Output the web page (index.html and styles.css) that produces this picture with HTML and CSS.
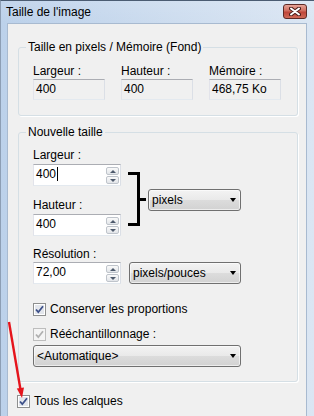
FILE: index.html
```html
<!DOCTYPE html>
<html lang="fr">
<head>
    <meta charset="UTF-8">
    <title>Taille de l'image</title>
    <link rel="stylesheet" href="styles.css">
</head>
<body>
<div class="window">
    <div class="titlebar">
        <span class="title">Taille de l'image</span>
        <span class="close">
            <svg width="12" height="9" viewBox="0 0 12 9">
                <path d="M2 1.5 L10 7.5 M10 1.5 L2 7.5" stroke="#4a1d19" stroke-width="4" stroke-linecap="round"/>
                <path d="M2 1.5 L10 7.5 M10 1.5 L2 7.5" stroke="#fff" stroke-width="2" stroke-linecap="round"/>
            </svg>
        </span>
    </div>
    <div class="client">
        <fieldset class="group group-info">
            <legend>Taille en pixels / Mémoire (Fond)</legend>
            <div class="info-row">
                <div class="info-cell">
                    <div class="label">Largeur :</div>
                    <div class="readonly">400</div>
                </div>
                <div class="info-cell">
                    <div class="label">Hauteur :</div>
                    <div class="readonly">400</div>
                </div>
                <div class="info-cell">
                    <div class="label">Mémoire :</div>
                    <div class="readonly">468,75 Ko</div>
                </div>
            </div>
        </fieldset>

        <fieldset class="group group-size">
            <legend>Nouvelle taille</legend>
            <div class="size-row">
                <div class="size-fields">
                    <div class="field">
                        <div class="label">Largeur :</div>
                        <div class="spin-field">
                            <span class="spin-text">400<span class="caret"></span></span>
                            <span class="spinner"><span class="spin up"></span><span class="spin down"></span></span>
                        </div>
                    </div>
                    <div class="field">
                        <div class="label">Hauteur :</div>
                        <div class="spin-field">
                            <span class="spin-text">400</span>
                            <span class="spinner"><span class="spin up"></span><span class="spin down"></span></span>
                        </div>
                    </div>
                </div>
                <div class="bracket"></div>
                <div class="combo combo-unit">pixels<span class="arrow-down"></span></div>
            </div>

            <div class="label label-res">Résolution :</div>
            <div class="res-row">
                <div class="spin-field">
                    <span class="spin-text">72,00</span>
                    <span class="spinner"><span class="spin up"></span><span class="spin down"></span></span>
                </div>
                <div class="combo combo-res">pixels/pouces<span class="arrow-down"></span></div>
            </div>

            <div class="check check-ratio">
                <svg class="box" width="13" height="13" viewBox="0 0 13 13">
                    <rect x="0.5" y="0.5" width="12" height="12" fill="#fff" stroke="#8e8f8f"/>
                    <rect x="2" y="2" width="9" height="9" fill="#e3e6ec"/>
                    <path d="M3 6.5 L5.3 9.2 L10 3.2" fill="none" stroke="#3d5089" stroke-width="1.8"/>
                </svg>
                <span>Conserver les proportions</span>
            </div>
            <div class="check check-resample disabled">
                <svg class="box" width="13" height="13" viewBox="0 0 13 13">
                    <rect x="0.5" y="0.5" width="12" height="12" fill="#f4f4f4" stroke="#bdbdbd"/>
                    <path d="M3 6.5 L5.3 9.2 L10 3.2" fill="none" stroke="#b0b0b0" stroke-width="1.8"/>
                </svg>
                <span>Rééchantillonnage :</span>
            </div>
            <div class="combo combo-method">&lt;Automatique&gt;<span class="arrow-down"></span></div>
        </fieldset>

        <div class="check check-layers">
            <svg class="box" width="13" height="13" viewBox="0 0 13 13">
                <rect x="0.5" y="0.5" width="12" height="12" fill="#fff" stroke="#8e8f8f"/>
                <rect x="2" y="2" width="9" height="9" fill="#e3e6ec"/>
                <path d="M3 6.5 L5.3 9.2 L10 3.2" fill="none" stroke="#3d5089" stroke-width="1.8"/>
            </svg>
            <span>Tous les calques</span>
        </div>
    </div>

    <!-- annotation -->
    <svg class="annotation" width="314" height="416" viewBox="0 0 314 416">
        <line x1="9" y1="322" x2="20.4" y2="389" stroke="#e5141c" stroke-width="2.4"/>
        <polygon points="22,398 24,387.4 16.8,388.6" fill="#e5141c"/>
    </svg>
</div>
</body>
</html>
```

FILE: styles.css
```css
* {
    box-sizing: border-box;
}
body {
    margin: 0;
    font-family: "Liberation Sans", Arial, sans-serif;
    font-size: 12px;
    line-height: 15px;
    color: #000;
}
.window {
    position: relative;
    width: 314px;
    height: 416px;
    overflow: hidden;
    display: flex;
    flex-direction: column;
    border-top: 1px solid #4b5c72;
    border-left: 1px solid #8d9eb4;
    background: linear-gradient(to right, #bcd1ea, #dbe6f3);
}
.titlebar {
    display: flex;
    align-items: flex-start;
    height: 22px;
    padding: 4px 7px 0 5px;
    background: linear-gradient(rgba(255, 255, 255, 0.1), rgba(255, 255, 255, 0));
}
.close {
    display: flex;
    align-items: center;
    justify-content: center;
    width: 24px;
    height: 15px;
    margin-left: auto;
    margin-top: -1px;
    border: 1px solid #5e2a26;
    border-radius: 3px;
    background: linear-gradient(#e7a497, #d06c5e 45%, #c0463a 55%, #cf6a58);
}
.client {
    flex: 1;
    margin: 0 7px 0 6px;
    padding: 16px 8px 0 10px;
    background: #f0f0f0;
    border: 1px solid #a8bad0;
    border-bottom: none;
}

/* group boxes */
.group {
    margin: 0;
    padding: 8px 14px 15px;
    border: 1px solid #d5dfe5;
    border-radius: 3px;
    box-shadow: 1px 1px 0 #fff;
    min-width: 0;
}
.group legend {
    margin-left: -7px;
    padding: 0 2px;
}
.group-info {
    padding-top: 9px;
}
.group-size {
    margin-top: 9px;
    padding-bottom: 14px;
}
.label {
    line-height: 15px;
}
.info-row {
    display: flex;
    gap: 16px;
}
.info-cell {
    width: 72px;
}
.readonly {
    height: 21px;
    padding-left: 2px;
    line-height: 19px;
    border: 1px solid;
    border-color: #abadb3 #dbdfe6 #e3e9ef #e2e3ea;
}

/* nouvelle taille */
.size-row {
    display: flex;
    align-items: flex-start;
}
.size-fields {
    width: 88px;
}
.field .label {
    margin-bottom: 1px;
}
.field + .field {
    margin-top: 12px;
}
.spin-field {
    display: flex;
    width: 88px;
    height: 22px;
    background: #fff;
    border: 1px solid;
    border-color: #abadb3 #dbdfe6 #e3e9ef #e2e3ea;
}
.spin-text {
    flex: 1;
    padding-left: 2px;
    line-height: 19px;
}
.caret {
    display: inline-block;
    width: 1px;
    height: 14px;
    margin-left: 1px;
    vertical-align: -3px;
    background: #000;
}
.spinner {
    display: flex;
    flex-direction: column;
    gap: 1px;
    padding: 2px 1px 0 0;
}
.spin {
    display: flex;
    align-items: center;
    justify-content: center;
    width: 13px;
    height: 8px;
    border: 1px solid #bfc4cb;
    border-radius: 2px;
    background: linear-gradient(#fafafa, #e2e5e9);
}
.spin::before {
    content: "";
    border-left: 3px solid transparent;
    border-right: 3px solid transparent;
}
.spin.up::before {
    border-bottom: 3px solid #4e5a6c;
}
.spin.down::before {
    border-top: 3px solid #4e5a6c;
}
.bracket {
    position: relative;
    width: 12px;
    height: 54px;
    margin: 24px 0 0 7px;
    border: 3px solid #000;
    border-left: none;
}
.bracket::after {
    content: "";
    position: absolute;
    top: 23px;
    right: -9px;
    width: 6px;
    height: 3px;
    background: #000;
}
.combo {
    display: flex;
    align-items: center;
    height: 22px;
    padding: 0 4px 0 3px;
    border: 1px solid #707070;
    border-radius: 3px;
    background: linear-gradient(#f3f3f3, #e9e9e9 50%, #dcdcdc 51%, #d2d2d2);
    box-shadow: inset 0 0 0 1px rgba(255, 255, 255, 0.6);
}
.arrow-down {
    margin-left: auto;
    border-top: 4px solid #000;
    border-left: 3.5px solid transparent;
    border-right: 3.5px solid transparent;
}
.combo-unit {
    width: 93px;
    margin: 41px 0 0 8px;
}
.label-res {
    margin-top: 11px;
}
.res-row {
    display: flex;
    gap: 8px;
}
.combo-res {
    width: 112px;
}
.combo-method {
    width: 208px;
    margin-top: 3px;
}

/* checkboxes */
.check {
    display: flex;
    align-items: center;
    gap: 4px;
    height: 15px;
}
.check .box {
    flex: none;
}
.check-ratio {
    margin-top: 18px;
}
.check-resample {
    margin-top: 10px;
}
.check-layers {
    margin: 12px 0 0 -1px;
}

.annotation {
    position: absolute;
    top: -1px;
    left: -1px;
    pointer-events: none;
}
```
